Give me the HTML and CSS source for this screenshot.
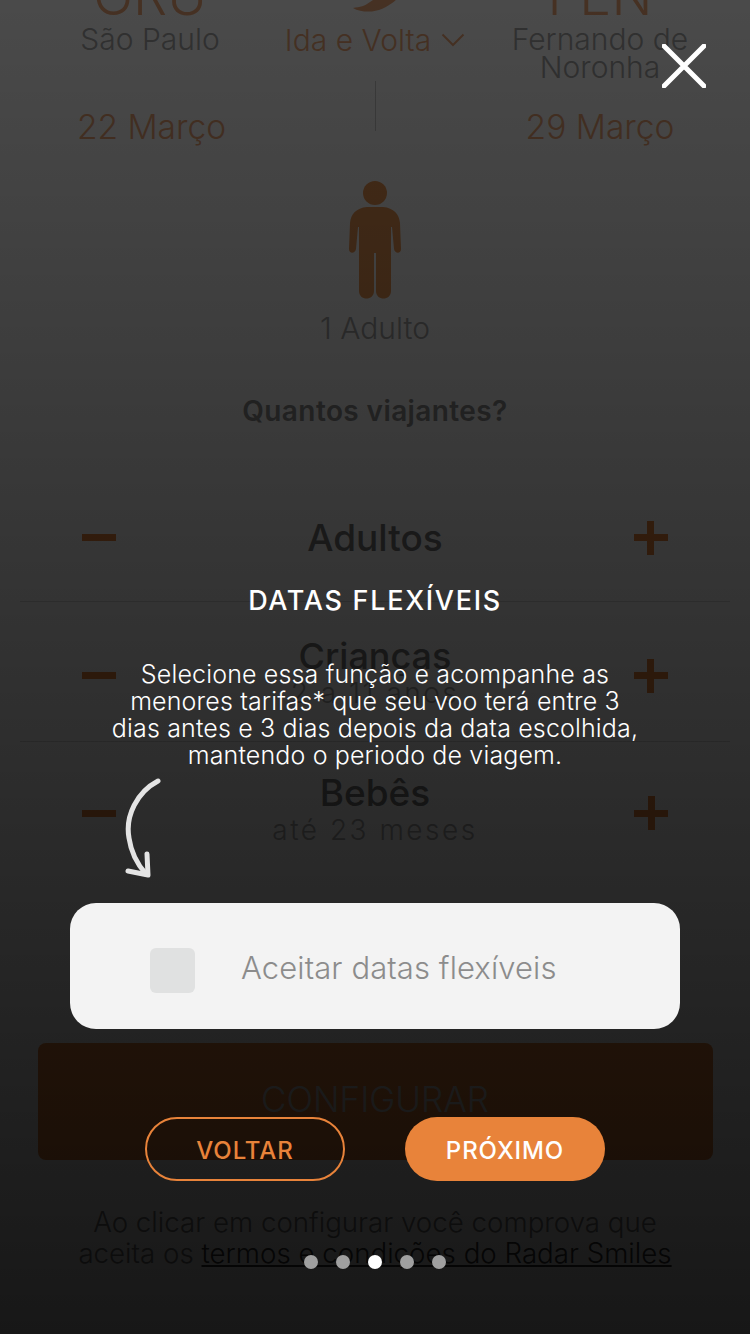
FILE: index.html
```html
<!DOCTYPE html>
<html lang="pt-BR">
<head>
    <meta charset="UTF-8">
    <meta name="viewport" content="width=device-width, initial-scale=1.0">
    <title>Radar Smiles - Datas flexíveis</title>
    <link rel="stylesheet" href="styles.css">
</head>
<body>
    <div class="screen">
        <!-- tela de configuracao, por baixo do tutorial -->
        <div class="page">
            <div class="route">
                <div class="route-col">
                    <div class="code">GRU</div>
                    <div class="city">São Paulo</div>
                </div>
                <div class="route-col">
                    <svg class="plane" width="46" height="14" viewBox="0 0 46 14">
                        <path d="M1 10 C8 9 13 8 18 4 L24 0 L46 0 C40 6 31 12 20 13.5 C13 14 6 13 1 10 Z" fill="#f0a878"/>
                    </svg>
                    <div class="city trip">Ida e Volta
                        <svg class="chevron" width="24" height="14" viewBox="0 0 24 14">
                            <path d="M1.5 1.5 L12 12 L22.5 1.5" fill="none" stroke="#f0a878" stroke-width="2"/>
                        </svg>
                    </div>
                </div>
                <div class="route-col">
                    <div class="code">FEN</div>
                    <div class="city">Fernando de Noronha</div>
                </div>
            </div>
            <div class="dates">
                <div class="date date-first">22 Março</div>
                <div class="date-line"></div>
                <div class="date">29 Março</div>
            </div>
            <svg class="person" width="52" height="118" viewBox="0 0 52 118">
                <circle cx="26" cy="12" r="12" fill="#f09a55"/>
                <path d="M18 26 H34 C45 27 50 33 51 42 L52 68 C52 73 46 73 45 68 L43 46 H42 V110 C42 120 27 120 27 110 V72 H25 V110 C25 120 10 120 10 110 V46 H9 L7 68 C6 73 0 73 0 68 L1 42 C2 33 7 27 18 26 Z" fill="#f09a55"/>
            </svg>
            <div class="adult-count">1 Adulto</div>
            <h2 class="question">Quantos viajantes?</h2>

            <div class="counter counter-first">
                <span class="minus"></span>
                <div class="counter-text"><div class="counter-name">Adultos</div></div>
                <span class="plus"></span>
            </div>
            <div class="counter counter-mid">
                <span class="minus"></span>
                <div class="counter-text">
                    <div class="counter-name counter-name-small">Crianças</div>
                    <div class="counter-age">2 a 11 anos</div>
                </div>
                <span class="plus"></span>
            </div>
            <div class="counter counter-last">
                <span class="minus"></span>
                <div class="counter-text">
                    <div class="counter-name">Bebês</div>
                    <div class="counter-age">até 23 meses</div>
                </div>
                <span class="plus"></span>
            </div>

            <div class="configure">CONFIGURAR</div>
            <p class="terms">Ao clicar em configurar você comprova que<br>aceita os <u>termos e condições do Radar Smiles</u></p>
        </div>

        <!-- tutorial -->
        <div class="overlay">
            <svg class="close" width="44" height="44" viewBox="0 0 44 44">
                <path d="M2 2 L42 42 M42 2 L2 42" fill="none" stroke="#fff" stroke-width="5" stroke-linecap="round"/>
            </svg>
            <h1 class="title">DATAS FLEXÍVEIS</h1>
            <p class="text">Selecione essa função e acompanhe as<br>menores tarifas* que seu voo terá entre 3<br>dias antes e 3 dias depois da data escolhida,<br>mantendo o periodo de viagem.</p>
            <svg class="arrow" width="40" height="100" viewBox="0 0 40 100">
                <path d="M33 3 C12 14 0 38 4 60 C6 74 12 86 21 96" fill="none" stroke="#e4e4e4" stroke-width="5" stroke-linecap="round"/>
                <path d="M22 76 L23 97 L3 93" fill="none" stroke="#e4e4e4" stroke-width="5" stroke-linecap="round" stroke-linejoin="round"/>
            </svg>
            <div class="accept">
                <span class="checkbox"></span>
                <span class="accept-label">Aceitar datas flexíveis</span>
            </div>
            <div class="buttons">
                <div class="btn btn-back">VOLTAR</div>
                <div class="btn btn-next">PRÓXIMO</div>
            </div>
            <div class="dots">
                <span class="dot"></span>
                <span class="dot"></span>
                <span class="dot active"></span>
                <span class="dot"></span>
                <span class="dot"></span>
            </div>
        </div>
    </div>
</body>
</html>
```

FILE: styles.css
```css
* {
    box-sizing: border-box;
}

body {
    margin: 0;
    font-family: Inter, "Noto Sans", Arial, sans-serif;
    font-weight: 300;
}

.screen {
    position: relative;
    width: 750px;
    height: 1334px;
    overflow: hidden;
    background: #fff;
}

/* tela de baixo */
.page {
    display: flex;
    flex-direction: column;
    align-items: center;
    margin-top: -30px;
    color: #a8a8a8;
    text-align: center;
}

.route {
    display: grid;
    grid-template-columns: 225px 225px 225px;
    width: 675px;
    height: 111px;
}

.route-col {
    display: flex;
    flex-direction: column;
    align-items: center;
}

.code {
    height: 52px;
    font-size: 54px;
    line-height: 52px;
    color: #f0a878;
}

.plane {
    margin-top: 28px;
    margin-bottom: 14px;
}

.city {
    font-size: 30px;
    line-height: 28px;
    margin-top: 3px;
    width: 200px;
}

.trip {
    display: flex;
    align-items: center;
    justify-content: center;
    gap: 10px;
    width: 225px;
    margin-top: 0;
    color: #f0a878;
    white-space: nowrap;
}

.dates {
    display: grid;
    grid-template-columns: 225px 225px 225px;
    justify-items: center;
    align-items: start;
    width: 675px;
    height: 69px;
}

.date {
    margin-top: 27px;
    font-size: 33.5px;
    line-height: 38px;
    color: #f0a878;
}

.date-first {
    margin-left: 3px;
}

.date-line {
    width: 1px;
    height: 50px;
    background: #ccc;
}

.person {
    margin-top: 31px;
}

.adult-count {
    margin-top: 12px;
    font-size: 30px;
    line-height: 34px;
}

.question {
    margin: 50px 0 0;
    font-size: 28px;
    line-height: 32px;
    letter-spacing: 0.4px;
    font-weight: 600;
    color: #8f8f8f;
}

.counter {
    display: flex;
    align-items: center;
    justify-content: space-between;
    width: 710px;
    padding: 0 62px;
    border-bottom: 1px solid #dcdcdc;
}

.counter-first {
    height: 118px;
    margin-top: 57px;
    padding-bottom: 10px;
}

.counter-mid {
    height: 140px;
}

.counter-last {
    height: 140px;
    border-bottom: 0;
}

.counter-mid .minus,
.counter-mid .plus {
    margin-top: 8px;
}

.counter-mid .counter-text {
    margin-top: 2px;
}

.counter-last .counter-text {
    margin-top: -4px;
}

.counter-last .minus,
.counter-last .plus {
    margin-top: 2px;
}

.counter-name {
    font-size: 37px;
    line-height: 40px;
    font-weight: 500;
    color: #777;
}

.counter-name-small {
    font-size: 36px;
}

.counter-age {
    font-size: 28px;
    line-height: 34px;
    letter-spacing: 2.5px;
    color: #a8a8a8;
}

.minus {
    width: 34px;
    height: 7px;
    background: #e8833a;
}

.plus {
    width: 34px;
    height: 34px;
    background: linear-gradient(#e8833a, #e8833a) center / 100% 7px no-repeat,
        linear-gradient(#e8833a, #e8833a) center / 7px 100% no-repeat;
}

.configure {
    width: 675px;
    height: 117px;
    margin-top: 161px;
    border-radius: 8px;
    background: #e8833a;
    font-size: 35px;
    line-height: 112px;
    color: #d0d0d0;
}

.terms {
    width: 640px;
    margin: 47px 0 0;
    font-size: 27.7px;
    line-height: 31px;
    color: #777;
}

.terms u {
    color: #333;
}

/* camada do tutorial */
.overlay {
    position: absolute;
    top: 0;
    right: 0;
    bottom: 0;
    left: 0;
    display: flex;
    flex-direction: column;
    align-items: center;
    padding-top: 583px;
    color: #fff;
    background: linear-gradient(rgba(0, 0, 0, 0.71), rgba(0, 0, 0, 0.91));
}

.close {
    position: absolute;
    top: 44px;
    left: 662px;
}

.title {
    margin: 0;
    font-size: 27px;
    line-height: 36px;
    letter-spacing: 1.7px;
    font-weight: 500;
}

.text {
    margin: 42px 0 0;
    font-size: 25px;
    line-height: 27px;
    letter-spacing: 0.15px;
    text-align: center;
}

.arrow {
    align-self: flex-start;
    margin: 9px 0 0 125px;
}

.accept {
    display: flex;
    align-items: center;
    width: 610px;
    height: 126px;
    margin-top: 25px;
    padding: 8px 0 0 80px;
    border-radius: 26px;
    background: #f3f3f3;
}

.checkbox {
    width: 45px;
    height: 45px;
    border-radius: 6px;
    background: #e0e1e1;
}

.accept-label {
    margin: -6px 0 0 46px;
    font-size: 31px;
    letter-spacing: 0.1px;
    color: #8c8c8c;
}

.buttons {
    display: flex;
    gap: 60px;
    margin-top: 88px;
}

.btn {
    width: 200px;
    height: 64px;
    border-radius: 32px;
    font-size: 24px;
    line-height: 68px;
    letter-spacing: 0.9px;
    font-weight: 500;
    text-align: center;
}

.btn-back {
    border: 2px solid #e8833a;
    line-height: 64px;
    color: #e8833a;
}

.btn-next {
    background: #e8833a;
    color: #fff;
}

.dots {
    display: flex;
    gap: 18px;
    margin-top: 74px;
}

.dot {
    width: 14px;
    height: 14px;
    border-radius: 50%;
    background: #a0a0a0;
}

.dot.active {
    background: #fff;
}
```
